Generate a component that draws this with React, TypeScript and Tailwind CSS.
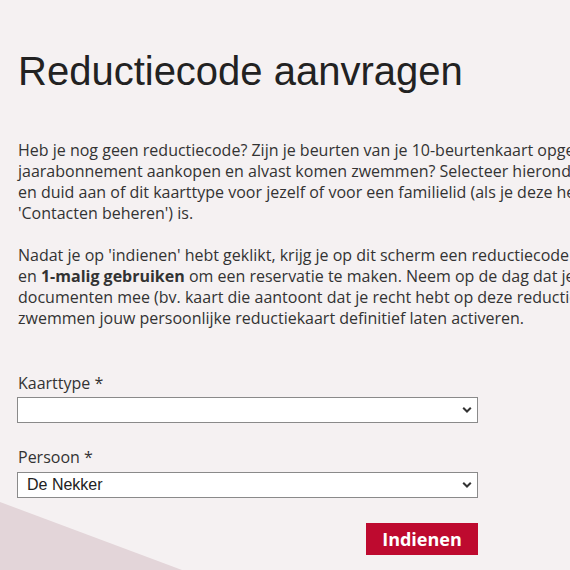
import React from "react";

const Chevron = () => (
  <svg
    className="pointer-events-none absolute right-[6px] top-1/2 -translate-y-1/2"
    width="10"
    height="7"
    viewBox="0 0 10 7"
  >
    <path d="M1.2 1.2 L5 5 L8.8 1.2" fill="none" stroke="#333" strokeWidth="2" />
  </svg>
);

export default function App() {
  return (
    <div className="relative h-[570px] w-[570px] overflow-hidden bg-[#f5f1f2]">
      <svg
        className="absolute left-0 top-0"
        width="570"
        height="570"
        viewBox="0 0 570 570"
      >
        <polygon points="0,502 182,570 0,570" fill="#e3d5d9" />
      </svg>
      <div className="relative pl-[18px] pt-[49px]">
        <h1
          className="text-[40px] leading-[44px] text-[#222] whitespace-nowrap"
          style={{ fontFamily: '"Liberation Sans", Arial, sans-serif' }}
        >
          Reductiecode aanvragen
        </h1>
        <div
          className="mt-[47px] w-[760px] text-[16px] leading-[21px] text-[#333] whitespace-nowrap"
          style={{ fontFamily: '"Open Sans", sans-serif' }}
        >
          <p>
            Heb je nog geen reductiecode? Zijn je beurten van je 10-beurtenkaart opgebruikt of wil je een
            <br />
            jaarabonnement aankopen en alvast komen zwemmen? Selecteer hieronder het gewenste kaarttype
            <br />
            en duid aan of dit kaarttype voor jezelf of voor een familielid (als je deze hebt toegevoegd via
            <br />
            'Contacten beheren') is.
          </p>
          <p className="mt-[21px]">
            Nadat je op 'indienen' hebt geklikt, krijg je op dit scherm een reductiecode die je
            <br />
            en <strong className="font-bold">1-malig gebruiken</strong> om een reservatie te maken. Neem op de dag dat je komt zwemmen de nodige
            <br />
            documenten mee (bv. kaart die aantoont dat je recht hebt op deze reductie) en laat aan de kassa van het
            <br />
            zwemmen jouw persoonlijke reductiekaart definitief laten activeren.
          </p>
          <div className="w-[461px] -ml-[1px] leading-[20px]">
            <label className="mt-[44px] ml-[1px] mb-[4px] block">Kaarttype *</label>
            <div className="relative">
              <select
                className="block h-[26px] w-[461px] appearance-none border border-[#8a8a8a] bg-white pl-[9px] text-[16px] text-[#222] outline-none"
                style={{ fontFamily: '"Liberation Sans", Arial, sans-serif' }}
                defaultValue=""
              >
                <option value=""></option>
              </select>
              <Chevron />
            </div>
            <label className="mt-[24px] ml-[1px] mb-[5px] block">Persoon *</label>
            <div className="relative">
              <select
                className="block h-[26px] w-[461px] appearance-none border border-[#8a8a8a] bg-white pl-[9px] text-[16px] text-[#222] outline-none"
                style={{ fontFamily: '"Liberation Sans", Arial, sans-serif' }}
                defaultValue="nekker"
              >
                <option value="nekker">De Nekker</option>
              </select>
              <Chevron />
            </div>
            <div className="mt-[25px] flex justify-end">
              <button className="h-[32px] w-[112px] bg-[#be0a2f] text-[18px] font-bold leading-[32px] text-white">
                Indienen
              </button>
            </div>
          </div>
        </div>
      </div>
    </div>
  );
}
